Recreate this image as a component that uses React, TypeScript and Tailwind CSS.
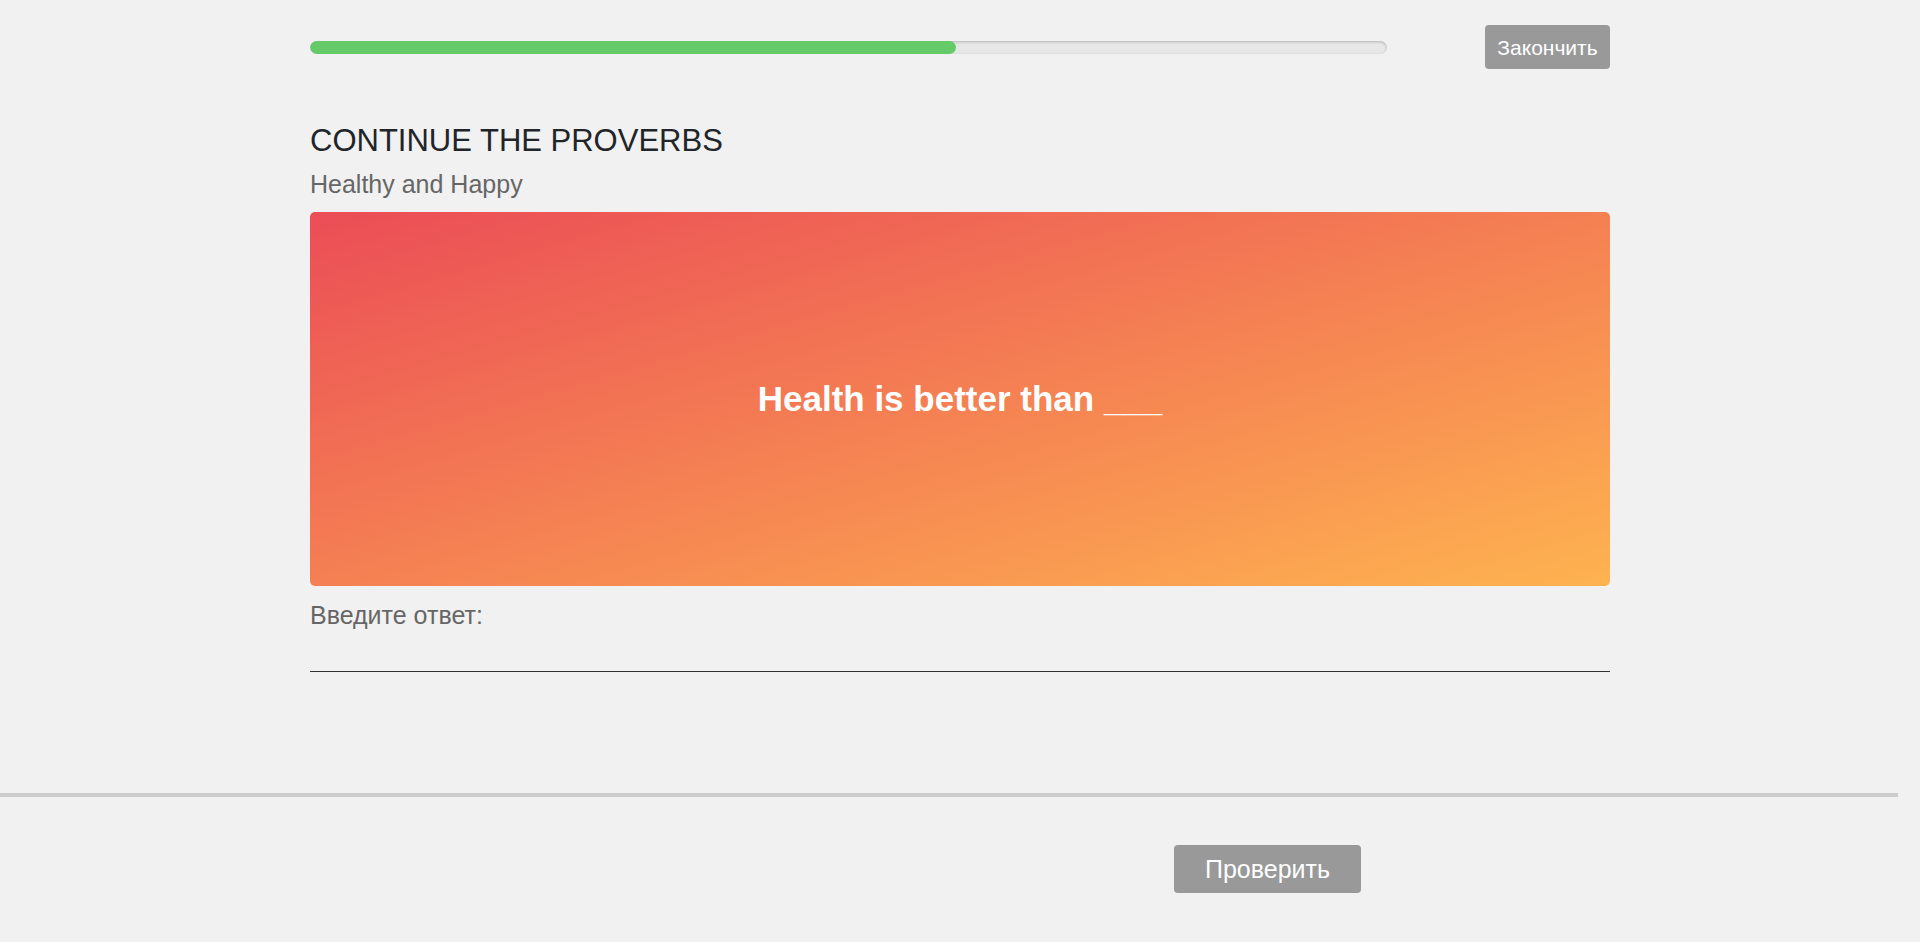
import React from "react";

export default function App() {
  const progress = 60;
  return (
    <div className="min-h-[942px] w-full bg-[#f1f1f1] font-['Liberation_Sans',Arial,sans-serif]">
      <div className="mx-auto w-[1300px]">
        <div className="flex h-[69px] items-end">
          <div className="flex h-[44px] w-full items-center">
            <div className="relative h-[13px] w-[1077px] overflow-hidden rounded-full bg-[#e7e7e7] shadow-[inset_0_1px_3px_rgba(0,0,0,0.22)]">
              <div
                className="h-full rounded-full bg-[#65cb68]"
                style={{ width: `${progress}%` }}
              />
            </div>
            <button className="ml-auto h-[44px] w-[125px] rounded-[4px] bg-[#999999] text-[21px] leading-none text-white">
              Закончить
            </button>
          </div>
        </div>

        <h1 className="mt-[54px] text-[31px] leading-[36px] font-normal text-[#212529]">
          CONTINUE THE PROVERBS
        </h1>
        <p className="mt-[11px] text-[25px] leading-[29px] text-[#666666]">
          Healthy and Happy
        </p>

        <div className="mt-[13px] flex h-[374px] items-center justify-center rounded-[5px] bg-[linear-gradient(to_bottom_right,#eb4d56,#feb350)]">
          <span className="text-[35px] leading-[40px] font-bold text-white">
            Health is better than ___
          </span>
        </div>

        <p className="mt-[15px] text-[25px] leading-[29px] text-[#666666]">
          Введите ответ:
        </p>
        <input
          type="text"
          className="block h-[42px] w-full border-0 border-b border-[#333333] bg-transparent text-[22px] outline-none"
        />
      </div>

      <div className="mt-[121px] h-[4px] w-[1898px] bg-[#cccccc]" />

      <div className="mt-[48px] pl-[1174px] pb-[49px]">
        <button className="h-[48px] w-[187px] rounded-[4px] bg-[#999999] text-[25px] leading-none text-white">
          Проверить
        </button>
      </div>
    </div>
  );
}
